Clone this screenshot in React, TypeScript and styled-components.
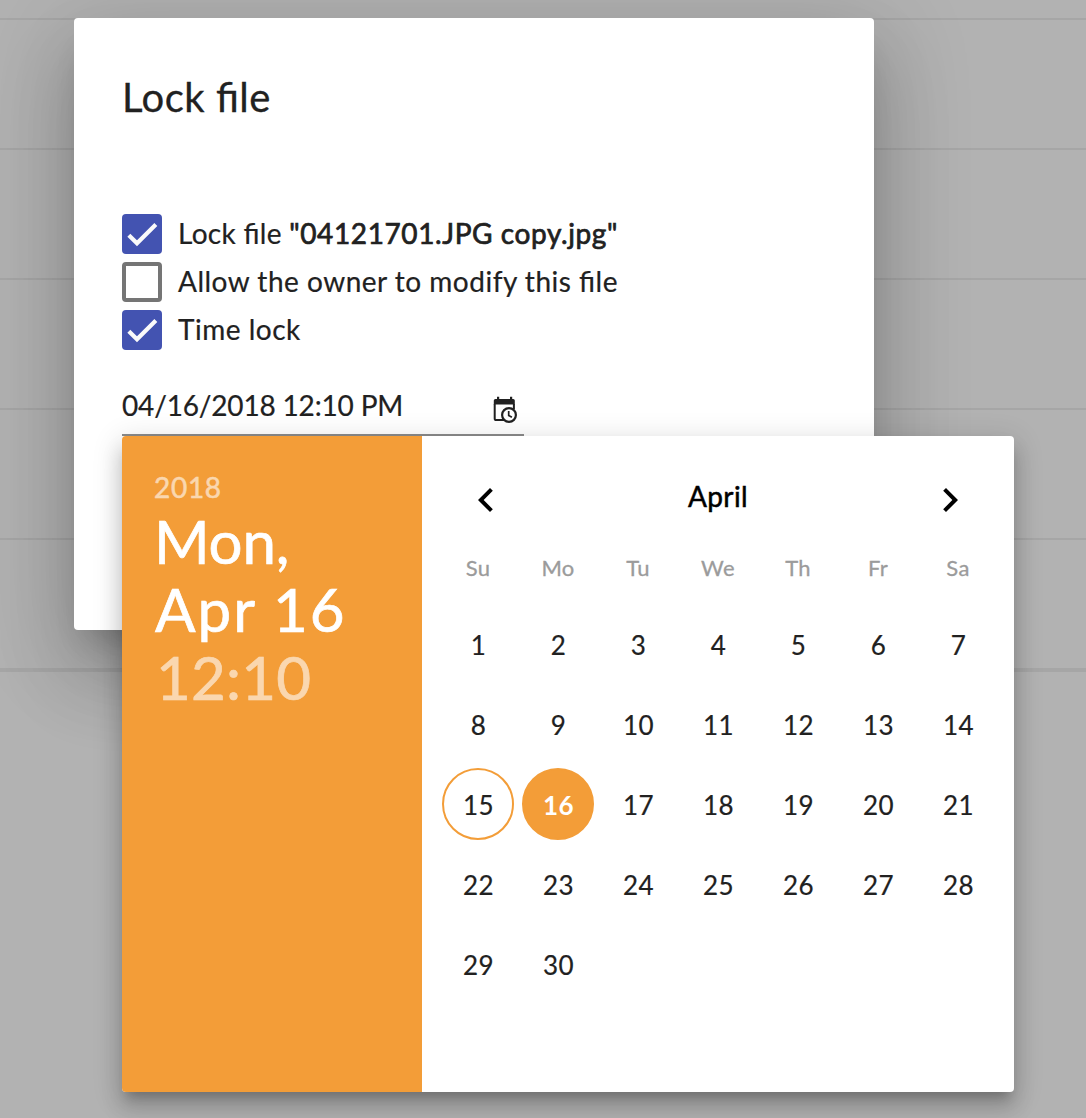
import React from "react";
import styled, { createGlobalStyle } from "styled-components";

const ORANGE = "#f39d38";

const GlobalStyle = createGlobalStyle`
  *, *::before, *::after { box-sizing: border-box; }
  body { margin: 0; background: #b2b2b2; overflow: hidden; }
  button { font: inherit; color: inherit; background: none; border: 0; padding: 0; margin: 0; }
`;

const Page = styled.div`
  position: relative;
  width: 1086px;
  height: 1118px;
  overflow: hidden;
  background: #b2b2b2;
  color: #212121;
  font-family: Lato, "Open Sans", sans-serif;
  font-size: 28px;
  font-feature-settings: "liga" 1;
`;

const FileList = styled.div`
  display: flex;
  flex-direction: column;
  height: 672px;
  border-bottom: 4px solid #a6a6a6;
`;

const FileRow = styled.div<{ $height: number }>`
  height: ${(p) => p.$height}px;
  border-bottom: 2px solid #a6a6a6;
  &:last-child { border-bottom: 0; }
`;

const Dialog = styled.section`
  position: absolute;
  left: 74px;
  top: 18px;
  width: 800px;
  height: 612px;
  padding: 55px 48px 48px;
  border-radius: 4px;
  background: #fff;
  box-shadow: 0 22px 30px -14px rgba(0, 0, 0, 0.2), 0 48px 76px 6px rgba(0, 0, 0, 0.14),
    0 18px 92px 16px rgba(0, 0, 0, 0.12);
`;

const Title = styled.h1`
  margin: 0 0 89px;
  font-size: 40px;
  font-weight: 400;
  line-height: 48px;
  letter-spacing: 0.5px;
  -webkit-text-stroke: 0.3px currentColor;
`;

const Options = styled.div`
  display: flex;
  flex-direction: column;
`;

const Option = styled.label`
  display: flex;
  align-items: center;
  gap: 16px;
  height: 48px;
`;

const Box = styled.span<{ $checked: boolean }>`
  display: flex;
  flex: none;
  width: 40px;
  height: 40px;
  border-radius: 4px;
  border: ${(p) => (p.$checked ? "0" : "4px solid #757575")};
  background: ${(p) => (p.$checked ? "#4353b1" : "#fff")};
`;

const OptionText = styled.span<{ $spacing: number }>`
  height: 48px;
  line-height: 46px;
  white-space: pre;
  letter-spacing: ${(p) => p.$spacing}px;
  -webkit-text-stroke: 0.2px currentColor;
`;

const FileName = styled.strong`
  font-weight: 400;
  letter-spacing: 0.6px;
  -webkit-text-stroke: 0.7px currentColor;
`;

const DateField = styled.div`
  display: flex;
  justify-content: space-between;
  width: 402px;
  height: 62px;
  margin-top: 20px;
  border-bottom: 2px solid #8c8c8c;
`;

const DateValue = styled.span`
  height: 60px;
  line-height: 62px;
  letter-spacing: -0.17px;
  -webkit-text-stroke: 0.2px currentColor;
`;

const CalendarIcon = styled.svg`
  width: 26px;
  height: 28px;
  margin: 22px 6px 0 0;
`;

const Picker = styled.section`
  position: absolute;
  left: 122px;
  top: 436px;
  width: 892px;
  height: 656px;
  display: flex;
  border-radius: 4px;
  background: #fff;
  box-shadow: 0 10px 10px -6px rgba(0, 0, 0, 0.2), 0 16px 20px 2px rgba(0, 0, 0, 0.14),
    0 6px 28px 4px rgba(0, 0, 0, 0.12);
`;

const Summary = styled.aside`
  width: 300px;
  padding: 32px;
  border-radius: 4px 0 0 4px;
  background: ${ORANGE};
  color: #fff;
`;

const Year = styled.div`
  height: 39px;
  line-height: 38px;
  letter-spacing: 0.7px;
  opacity: 0.6;
  -webkit-text-stroke: 0.5px currentColor;
`;

const BigLine = styled.div<{ $dim?: boolean; $spacing: number; $indent?: number }>`
  font-size: 60px;
  line-height: 68px;
  padding-left: ${(p) => p.$indent ?? 0}px;
  letter-spacing: ${(p) => p.$spacing}px;
  white-space: nowrap;
  opacity: ${(p) => (p.$dim ? 0.6 : 1)};
  -webkit-text-stroke: 0.7px currentColor;
`;

const Calendar = styled.div`
  flex: 1;
  padding: 40px 16px 0;
`;

const MonthBar = styled.header`
  display: flex;
  align-items: center;
  justify-content: space-between;
  height: 48px;
  padding: 0 24px;
  color: #000;
`;

const ArrowButton = styled.button`
  width: 48px;
  height: 48px;
  svg { display: block; width: 48px; height: 48px; fill: currentColor; }
`;

const MonthName = styled.span`
  line-height: 40px;
  height: 48px;
  letter-spacing: 0.4px;
  -webkit-text-stroke: 0.5px currentColor;
`;

const Grid = styled.div`
  display: grid;
  grid-template-columns: repeat(7, 80px);
`;

const WeekDay = styled.span`
  height: 80px;
  line-height: 88px;
  text-align: center;
  font-size: 22px;
  letter-spacing: 0.3px;
  color: #9b9b9b;
  -webkit-text-stroke: 0.3px currentColor;
`;

const Day = styled.button<{ $state: "plain" | "today" | "selected" }>`
  width: 72px;
  height: 72px;
  margin: 4px;
  border-radius: 50%;
  border: 2px solid ${(p) => (p.$state === "plain" ? "transparent" : ORANGE)};
  background: ${(p) => (p.$state === "selected" ? ORANGE : "transparent")};
  color: ${(p) => (p.$state === "selected" ? "#fff" : "#212121")};
  padding: 2px 0 0 1px;
  font-size: 26px;
  line-height: 66px;
  letter-spacing: 0.5px;
  font-weight: ${(p) => (p.$state === "selected" ? 700 : 400)};
  -webkit-text-stroke: ${(p) => (p.$state === "selected" ? 0 : 0.2)}px currentColor;
`;

function Checkbox({ checked }: { checked: boolean }) {
  return (
    <Box $checked={checked}>
      {checked && (
        <svg width="40" height="40" viewBox="0 0 24 24" fill="none">
          <path d="M4.1 12.7 9 17.6 20.3 6.3" stroke="#fafafa" strokeWidth="2.5" />
        </svg>
      )}
    </Box>
  );
}

function CalendarClock() {
  return (
    <CalendarIcon viewBox="0 0 26 28" fill="none">
      <path d="M5 .8h2.2V3H18V.8h2.2V3h1a1.6 1.6 0 0 1 1.6 1.6v4H1.8v-4A1.6 1.6 0 0 1 3.4 3H5z" fill="#212121" />
      <path d="M2.7 8v14.4a1.6 1.6 0 0 0 1.6 1.6H12M21.9 8v5" stroke="#212121" strokeWidth="2" />
      <circle cx="17" cy="19" r="6.9" fill="#fff" stroke="#212121" strokeWidth="2.2" />
      <path d="M16.7 15v4.4l3.2 1.9" stroke="#212121" strokeWidth="1.7" />
    </CalendarIcon>
  );
}

const rowHeights = [20, 130, 130, 130, 130, 128];
const weekDays = ["Su", "Mo", "Tu", "We", "Th", "Fr", "Sa"];
const days = Array.from({ length: 30 }, (_, i) => i + 1);

export default function App() {
  return (
    <Page>
      <GlobalStyle />
      <FileList>
        {rowHeights.map((h, i) => (
          <FileRow key={i} $height={h} />
        ))}
      </FileList>

      <Dialog>
        <Title>Lock file</Title>
        <Options>
          <Option>
            <Checkbox checked />
            <OptionText $spacing={0.3}>
              Lock file <FileName>"04121701.JPG copy.jpg"</FileName>
            </OptionText>
          </Option>
          <Option>
            <Checkbox checked={false} />
            <OptionText $spacing={0.5}>Allow the owner to modify this file</OptionText>
          </Option>
          <Option>
            <Checkbox checked />
            <OptionText $spacing={0.5}>Time lock</OptionText>
          </Option>
        </Options>
        <DateField>
          <DateValue>04/16/2018 12:10 PM</DateValue>
          <CalendarClock />
        </DateField>
      </Dialog>

      <Picker>
        <Summary>
          <Year>2018</Year>
          <BigLine $spacing={-0.2}>Mon,</BigLine>
          <BigLine $spacing={2} $indent={1}>Apr 16</BigLine>
          <BigLine $spacing={0.2} $indent={2} $dim>12:10</BigLine>
        </Summary>
        <Calendar>
          <MonthBar>
            <ArrowButton aria-label="Previous month">
              <svg viewBox="0 0 24 24"><path d="M15.41 7.41 14 6l-6 6 6 6 1.41-1.41L10.83 12z" /></svg>
            </ArrowButton>
            <MonthName>April</MonthName>
            <ArrowButton aria-label="Next month">
              <svg viewBox="0 0 24 24"><path d="M10 6 8.59 7.41 13.17 12l-4.58 4.59L10 18l6-6z" /></svg>
            </ArrowButton>
          </MonthBar>
          <Grid>
            {weekDays.map((d) => (
              <WeekDay key={d}>{d}</WeekDay>
            ))}
            {days.map((d) => (
              <Day key={d} $state={d === 15 ? "today" : d === 16 ? "selected" : "plain"}>
                {d}
              </Day>
            ))}
          </Grid>
        </Calendar>
      </Picker>
    </Page>
  );
}
